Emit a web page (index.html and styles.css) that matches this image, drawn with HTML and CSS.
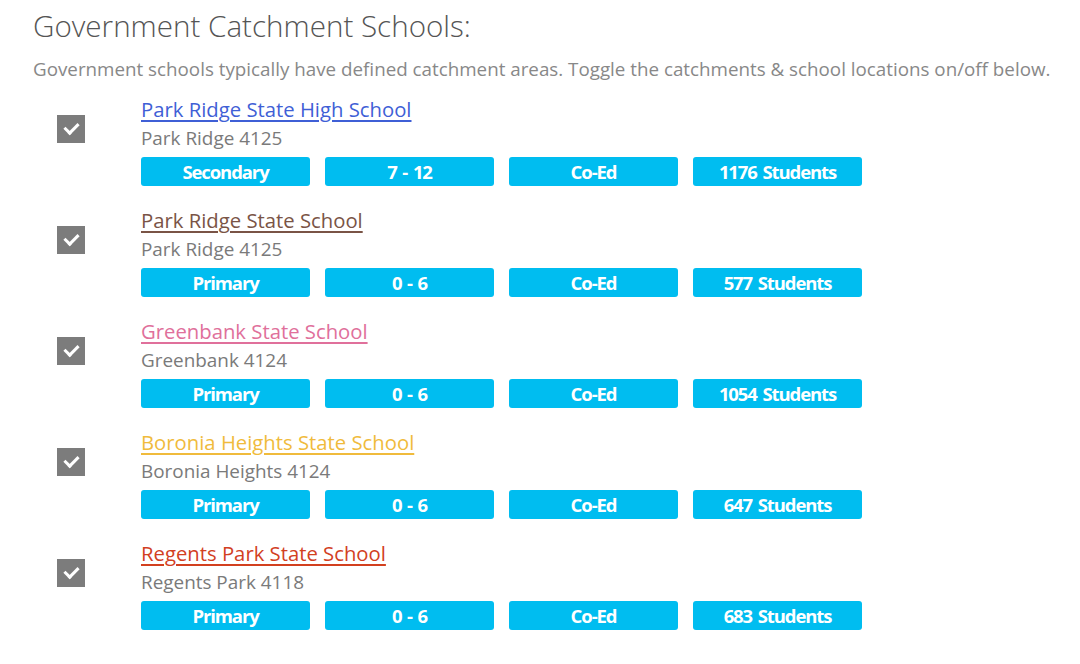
FILE: index.html
```html
<!DOCTYPE html>
<html lang="en">
<head>
    <meta charset="UTF-8">
    <title>Government Catchment Schools</title>
    <link rel="stylesheet" href="styles.css">
</head>
<body>
    <div class="container">
        <h2 class="title">Government Catchment Schools:</h2>
        <p class="intro">Government schools typically have defined catchment areas. Toggle the catchments &amp; school locations on/off below.</p>

        <div class="school">
            <label class="check"><input type="checkbox" checked><span class="box"></span></label>
            <div class="info">
                <a href="#" class="name blue">Park Ridge State High School</a>
                <div class="suburb">Park Ridge 4125</div>
                <div class="tags">
                    <span class="tag">Secondary</span>
                    <span class="tag">7 - 12</span>
                    <span class="tag">Co-Ed</span>
                    <span class="tag">1176 Students</span>
                </div>
            </div>
        </div>

        <div class="school">
            <label class="check"><input type="checkbox" checked><span class="box"></span></label>
            <div class="info">
                <a href="#" class="name brown">Park Ridge State School</a>
                <div class="suburb">Park Ridge 4125</div>
                <div class="tags">
                    <span class="tag">Primary</span>
                    <span class="tag">0 - 6</span>
                    <span class="tag">Co-Ed</span>
                    <span class="tag">577 Students</span>
                </div>
            </div>
        </div>

        <div class="school">
            <label class="check"><input type="checkbox" checked><span class="box"></span></label>
            <div class="info">
                <a href="#" class="name pink">Greenbank State School</a>
                <div class="suburb">Greenbank 4124</div>
                <div class="tags">
                    <span class="tag">Primary</span>
                    <span class="tag">0 - 6</span>
                    <span class="tag">Co-Ed</span>
                    <span class="tag">1054 Students</span>
                </div>
            </div>
        </div>

        <div class="school">
            <label class="check"><input type="checkbox" checked><span class="box"></span></label>
            <div class="info">
                <a href="#" class="name yellow">Boronia Heights State School</a>
                <div class="suburb">Boronia Heights 4124</div>
                <div class="tags">
                    <span class="tag">Primary</span>
                    <span class="tag">0 - 6</span>
                    <span class="tag">Co-Ed</span>
                    <span class="tag">647 Students</span>
                </div>
            </div>
        </div>

        <div class="school">
            <label class="check"><input type="checkbox" checked><span class="box"></span></label>
            <div class="info">
                <a href="#" class="name red">Regents Park State School</a>
                <div class="suburb">Regents Park 4118</div>
                <div class="tags">
                    <span class="tag">Primary</span>
                    <span class="tag">0 - 6</span>
                    <span class="tag">Co-Ed</span>
                    <span class="tag">683 Students</span>
                </div>
            </div>
        </div>
    </div>
</body>
</html>
```

FILE: styles.css
```css
body {
    margin: 0;
    font-family: "Open Sans", "Liberation Sans", sans-serif;
    background: #fff;
    color: #777;
}
.container {
    padding: 8px 33px 0;
}
.title {
    font-size: 29.6px;
    font-weight: 300;
    color: #555;
    margin: 0;
    line-height: 36px;
}
.intro {
    font-size: 18.8px;
    color: #888;
    margin: 13px 0 0;
    line-height: 24px;
    white-space: nowrap;
}
.school {
    display: flex;
    margin-top: 14px;
}
.school + .school {
    margin-top: 20px;
}
.check {
    margin: 20px 56px 0 24px;
    width: 28px;
    height: 28px;
    flex: none;
}
.check input {
    display: none;
}
.box {
    display: block;
    width: 28px;
    height: 28px;
    background: #7c7c7c;
    position: relative;
}
.box::after {
    content: "";
    position: absolute;
    left: 10px;
    top: 5px;
    width: 6px;
    height: 11px;
    border: solid #fff;
    border-width: 0 3px 3px 0;
    transform: rotate(45deg);
}
.info {
    display: flex;
    flex-direction: column;
    align-items: flex-start;
}
.name {
    font-size: 20.3px;
    line-height: 28px;
    text-decoration: underline;
    text-underline-offset: 3px;
}
.blue { color: #3f5fd6; }
.brown { color: #7a5446; }
.pink { color: #e0709b; }
.yellow { color: #f0bb3c; }
.red { color: #d2401f; }
.suburb {
    font-size: 18.9px;
    line-height: 28px;
    color: #7a7a7a;
    margin-top: 1px;
}
.tags {
    display: flex;
    gap: 15px;
    margin-top: 5px;
}
.tag {
    width: 169px;
    height: 29px;
    line-height: 29px;
    background: #00bdf0;
    color: #fff;
    border-radius: 3px;
    text-align: center;
    font-size: 18.5px;
    font-weight: 700;
    letter-spacing: -1.1px;
    word-spacing: 2px;
}
```
